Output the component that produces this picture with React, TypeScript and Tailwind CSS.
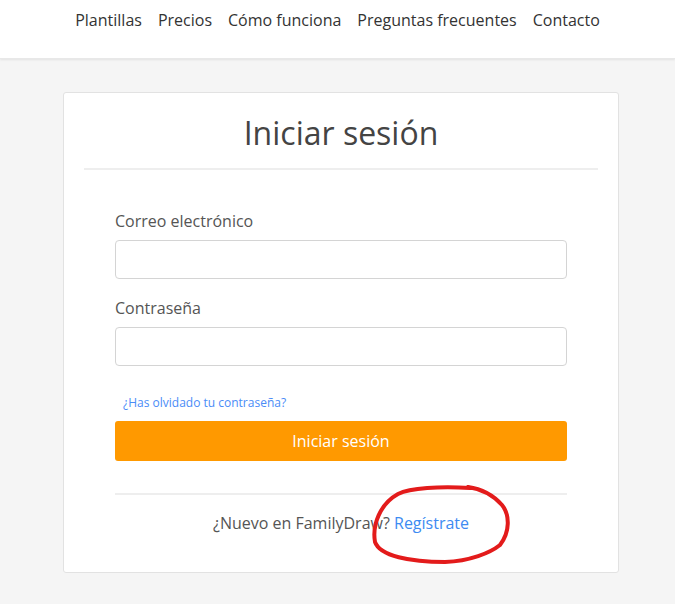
export default function App() {
    const navItems = ["Plantillas", "Precios", "Cómo funciona", "Preguntas frecuentes", "Contacto"];

    return (
        <div className="relative min-h-[604px] bg-[#f5f5f5] font-['Open_Sans',sans-serif]">

            {/* top nav */}
            <header className="h-[59px] bg-white shadow-[0_1px_2px_rgba(0,0,0,0.08)] border-b border-[#e8e8e8]">
                <nav className="flex justify-center gap-[16px] pt-[8px] text-[16px] text-[#333]">
                    {navItems.map((item) => (
                        <span key={item}>{item}</span>
                    ))}
                </nav>
            </header>

            {/* login card */}
            <div className="ml-[63px] mt-[33px] w-[556px] rounded-[3px] border border-[#e2e2e2] bg-white">

                <div className="px-[20px]">
                    <h1 className="pt-[18px] pb-[14px] text-center text-[32px] leading-[43px] text-[#444]">
                        Iniciar sesión
                    </h1>
                    <div className="h-[2px] bg-[#eeeeee]" />
                </div>

                <form className="px-[51px] pt-[40px]">

                    <label className="block text-[16px] leading-[22px] text-[#555]">
                        Correo electrónico
                    </label>
                    <input
                        type="email"
                        className="mt-[8px] block h-[39px] w-full rounded-[4px] border border-[#d4d4d4] bg-white"
                    />

                    <label className="mt-[18px] block text-[16px] leading-[22px] text-[#555]">
                        Contraseña
                    </label>
                    <input
                        type="password"
                        className="mt-[8px] block h-[39px] w-full rounded-[4px] border border-[#d4d4d4] bg-white"
                    />

                    <a className="mt-[28px] ml-[8px] block text-[12px] leading-[17px] text-[#4a8cf7]">
                        ¿Has olvidado tu contraseña?
                    </a>

                    <button
                        type="button"
                        className="mt-[10px] block h-[40px] w-full rounded-[3px] bg-[#ff9900] text-[16px] text-white"
                    >
                        Iniciar sesión
                    </button>

                    <div className="mt-[32px] h-[2px] bg-[#eeeeee]" />

                    <p className="pt-[17px] pb-[38px] text-center text-[16px] leading-[22px] text-[#555]">
                        ¿Nuevo en FamilyDraw? <a className="text-[#3d8bf2]">Regístrate</a>
                    </p>
                </form>
            </div>

            {/* red hand-drawn annotation */}
            <svg className="pointer-events-none absolute left-0 top-0" width="675" height="604">
                <path
                    d="M470 488 C440 486 410 488 398 494 C380 504 372 525 375 542 C380 556 410 562 445 562 C470 561 490 553 500 545 C510 532 510 515 502 505 C494 496 482 489 468 487"
                    fill="none"
                    stroke="#e31b1b"
                    strokeWidth="4"
                    strokeLinecap="round"
                />
            </svg>
        </div>
    );
}
